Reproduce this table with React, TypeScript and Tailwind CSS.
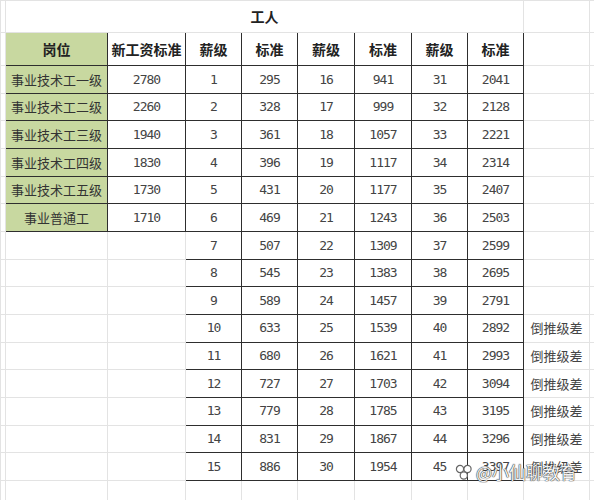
import React from 'react';

const jobs = [
  ['事业技术工一级', '2780'],
  ['事业技术工二级', '2260'],
  ['事业技术工三级', '1940'],
  ['事业技术工四级', '1830'],
  ['事业技术工五级', '1730'],
  ['事业普通工', '1710'],
];

const salaryBase = [
  295, 328, 361, 396, 431, 469, 507, 545, 589, 633, 680, 727, 779, 831, 886,
  941, 999, 1057, 1117, 1177, 1243, 1309, 1383, 1457, 1539, 1621, 1703, 1785, 1867, 1954,
  2041, 2128, 2221, 2314, 2407, 2503, 2599, 2695, 2791, 2892, 2993, 3094, 3195, 3296, 3397,
];

const cjk = "font-['Noto_Sans_CJK_SC',sans-serif]";
const num = "font-['DejaVu_Sans_Mono',monospace] text-[13px] tracking-[-1px] text-[#444]";
const light = 'border border-[#e3e3e3]';
const dark = 'border-[1.5px] border-[#2e2e2e]';

const App = () => {
  const rows = Array.from({ length: 15 }, (_, i) => i);

  return (
    <div className="relative w-[594px] h-[500px] overflow-hidden bg-white">
      <table className="table-fixed border-collapse w-[594px]">
        <colgroup>
          <col className="w-[5px]" />
          <col className="w-[102px]" />
          <col className="w-[78px]" />
          <col className="w-[56px]" />
          <col className="w-[56px]" />
          <col className="w-[57px]" />
          <col className="w-[57px]" />
          <col className="w-[56px]" />
          <col className="w-[56px]" />
          <col className="w-[66px]" />
          <col className="w-[5px]" />
        </colgroup>
        <tbody>
          {/* 标题行 */}
          <tr className="h-[32px]">
            <td className={`${light} p-0`} />
            <td
              colSpan={8}
              className={`${light} p-0 text-center ${cjk} text-[14px] font-bold text-[#222]`}
            >
              工人
            </td>
            <td className={`${light} p-0`} />
            <td className={`${light} p-0`} />
          </tr>

          {/* 表头 */}
          <tr className="h-[33px]">
            <td className={`${light} p-0`} />
            <td className={`${dark} p-0 bg-[#c8d8a0] text-center ${cjk} text-[14px] font-bold text-[#222]`}>
              岗位
            </td>
            <td className={`${dark} p-0 text-center ${cjk} text-[14px] font-bold text-[#222]`}>
              新工资标准
            </td>
            {['薪级', '标准', '薪级', '标准', '薪级', '标准'].map((h, i) => (
              <td
                key={i}
                className={`${dark} p-0 text-center ${cjk} text-[14px] font-bold text-[#222]`}
              >
                {h}
              </td>
            ))}
            <td className={`${light} p-0`} />
            <td className={`${light} p-0`} />
          </tr>

          {rows.map((r) => {
            const job = jobs[r];
            return (
              <tr key={r} className="h-[27.67px]">
                <td className={`${light} p-0`} />
                {job ? (
                  <>
                    <td className={`${dark} p-0 bg-[#c8d8a0] text-center ${cjk} text-[13px] text-[#333] whitespace-nowrap`}>
                      {job[0]}
                    </td>
                    <td className={`${dark} p-0 text-center ${num}`}>{job[1]}</td>
                  </>
                ) : (
                  <>
                    <td className={`${light} p-0`} />
                    <td className={`${light} p-0`} />
                  </>
                )}
                {[0, 1, 2].map((g) => (
                  <React.Fragment key={g}>
                    <td className={`${dark} p-0 text-center ${num}`}>{g * 15 + r + 1}</td>
                    <td className={`${dark} p-0 text-center ${num}`}>{salaryBase[g * 15 + r]}</td>
                  </React.Fragment>
                ))}
                <td className={`${light} p-0 text-center ${cjk} text-[13px] text-[#444] whitespace-nowrap`}>
                  {r >= 9 ? '倒推级差' : ''}
                </td>
                <td className={`${light} p-0`} />
              </tr>
            );
          })}

          <tr className="h-[27.67px]">
            {Array.from({ length: 11 }, (_, i) => (
              <td key={i} className={`${light} p-0`} />
            ))}
          </tr>
        </tbody>
      </table>

      {/* 水印 */}
      <div className="absolute left-[455px] top-[463px] flex items-center gap-[3px]">
        <svg width="18" height="16" viewBox="0 0 18 16" fill="none" stroke="#666" strokeWidth="1.2">
          <circle cx="5" cy="5" r="3.6" fill="#fff" />
          <circle cx="12.5" cy="5" r="3.6" fill="#fff" />
          <circle cx="8.8" cy="11.5" r="3.6" fill="#fff" />
        </svg>
        <span
          className={`${cjk} text-[17px] leading-none text-white/95 [text-shadow:0_0_1px_#444,0_0_1px_#444,0_0_1px_#444]`}
        >
          @小仙聊教育
        </span>
      </div>
    </div>
  );
};

export default App;
